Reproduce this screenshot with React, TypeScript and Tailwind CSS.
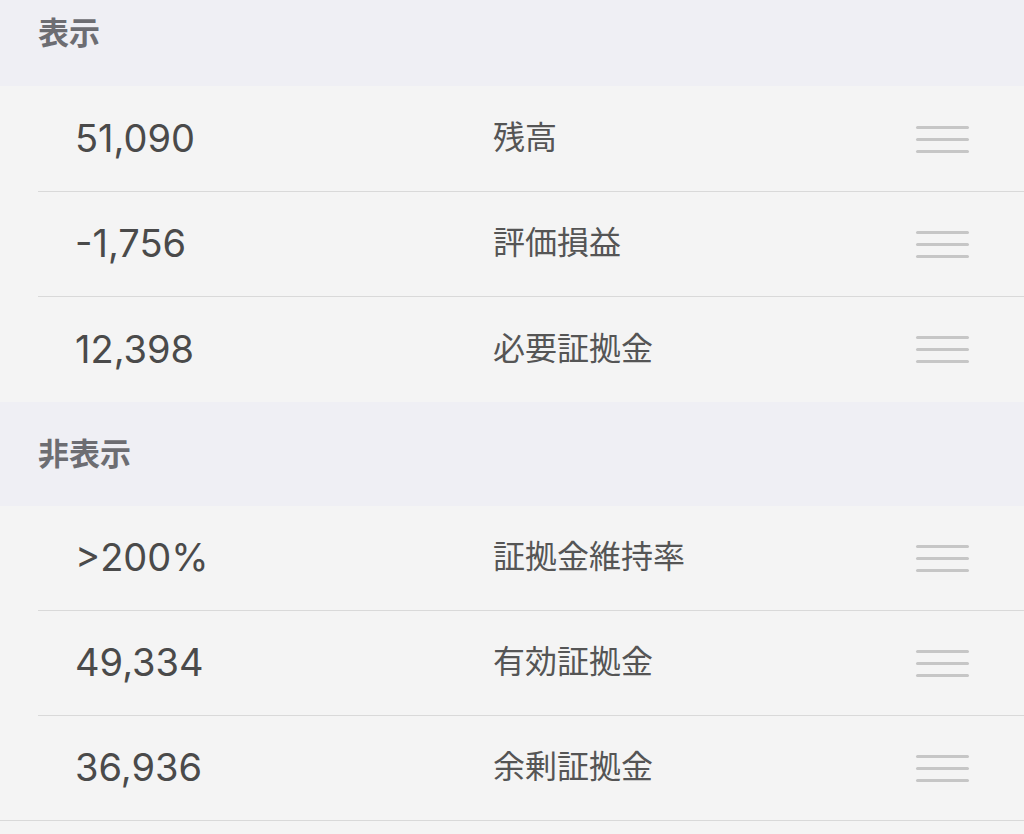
import React from "react";

type Item = { value: string; label: string };

const shown: Item[] = [
  { value: "51,090", label: "残高" },
  { value: "-1,756", label: "評価損益" },
  { value: "12,398", label: "必要証拠金" },
];

const hidden: Item[] = [
  { value: ">200%", label: "証拠金維持率" },
  { value: "49,334", label: "有効証拠金" },
  { value: "36,936", label: "余剰証拠金" },
];

const font = {
  fontFamily: '"Liberation Sans", "Noto Sans CJK JP", sans-serif',
};

const numFont = {
  fontFamily: 'Inter, "Liberation Sans", sans-serif',
};

function Handle() {
  return (
    <div className="flex w-[53px] flex-col gap-[9px]">
      <div className="h-[3px] w-full rounded-full bg-[#c6c6c6]" />
      <div className="h-[3px] w-full rounded-full bg-[#c6c6c6]" />
      <div className="h-[3px] w-full rounded-full bg-[#c6c6c6]" />
    </div>
  );
}

function Row({ item, border, full }: { item: Item; border: boolean; full?: boolean }) {
  return (
    <div className={`h-[105px] ${full ? "border-b border-[#d9d9d9]" : "pl-[38px]"}`}>
      <div
        className={`flex h-full items-center pr-[55px] ${full ? "pl-[75px]" : "pl-[37px]"} ${
          border ? "border-b border-[#d9d9d9]" : ""
        }`}
      >
        <span
          className="w-[418px] pb-[2px] text-[38px] leading-none text-[#4a4a4a]"
          style={numFont}
        >
          {item.value}
        </span>
        <span className="flex-1 pb-[2px] text-[32px] leading-none text-[#555555]">{item.label}</span>
        <Handle />
      </div>
    </div>
  );
}

export default function App() {
  return (
    <div className="min-h-[834px] bg-[#f4f4f4]" style={font}>
      <div className="flex h-[86px] items-center bg-[#efeff4] pb-[20px] pl-[38px]">
        <span className="text-[31px] font-bold leading-none text-[#6d6d72]">表示</span>
      </div>
      <div className="pt-[1px]">
        {shown.map((it, i) => (
          <Row key={it.label} item={it} border={i < shown.length - 1} />
        ))}
      </div>
      <div className="flex h-[104px] items-center bg-[#efeff4] pl-[38px]">
        <span className="text-[31px] font-bold leading-none text-[#6d6d72]">非表示</span>
      </div>
      <div>
        {hidden.map((it, i) => (
          <Row
            key={it.label}
            item={it}
            border={i < hidden.length - 1}
            full={i === hidden.length - 1}
          />
        ))}
      </div>
    </div>
  );
}
